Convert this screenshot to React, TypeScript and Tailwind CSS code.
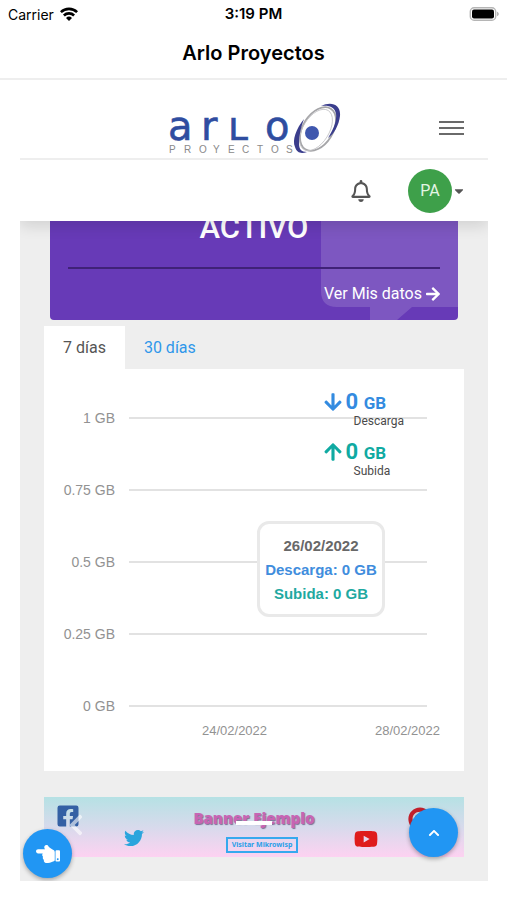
import React from "react";
import {
  FaArrowDown,
  FaArrowRight,
  FaArrowUp,
  FaCaretDown,
  FaChevronLeft,
  FaChevronUp,
  FaFacebookSquare,
  FaHandPointLeft,
  FaPinterest,
  FaRegBell,
  FaTwitter,
  FaYoutube,
} from "react-icons/fa";

const ticks = ["1 GB", "0.75 GB", "0.5 GB", "0.25 GB", "0 GB"];

const StatusBar: React.FC = () => (
  <div className="grid h-7 grid-cols-3 items-center px-2 text-[14px] text-black">
    <div className="flex items-center gap-[6px]">
      <span>Carrier</span>
      <svg viewBox="0 0 18 14" className="h-[14px] w-[18px]" fill="none" stroke="black" strokeWidth="2.6">
        <path d="M0.9 5.2a11.5 11.5 0 0 1 16.2 0" />
        <path d="M3.9 8.5a7.3 7.3 0 0 1 10.2 0" />
        <path d="M9 13.9 6 10.9a4.3 4.3 0 0 1 6 0z" fill="black" stroke="none" />
      </svg>
    </div>
    <span className="text-center text-[15px] font-semibold">3:19 PM</span>
    <svg viewBox="0 0 30 14" className="h-[14px] w-[30px] justify-self-end">
      <rect x="1.3" y="0.8" width="25.4" height="12.4" rx="3.8" fill="#fff" stroke="#b5b5b5" strokeWidth="1.4" />
      <rect x="3" y="2.4" width="22" height="9.2" rx="2" fill="black" />
      <path d="M28 4.8c2.4.7 2.4 3.7 0 4.4z" fill="#b5b5b5" />
    </svg>
  </div>
);

const Logo: React.FC = () => (
  <svg viewBox="0 0 176 54" className="h-[54px] w-[176px]" role="img" aria-label="Arlo Proyectos">
    <text x="-1 32 59 96" y="38" fontFamily="DejaVu Sans" fontSize="40" fill="#2f4da0" stroke="#2f4da0" strokeWidth="0.6">
      arʟo
    </text>
    <text x="0 15 30 44 59 73 88 102 117" y="51" fontFamily="Liberation Sans" fontSize="10" fill="#8a8a8a">
      PROYECTOS
    </text>
    <g fill="none">
      <ellipse cx="149" cy="27" rx="15" ry="24" transform="rotate(32 149 27)" stroke="#a5a5a8" strokeWidth="1.8" />
      <ellipse cx="147" cy="28" rx="13" ry="23" transform="rotate(32 147 28)" stroke="#c2c2c6" strokeWidth="0.8" />
    </g>
    <path d="M152 4c11-5 20-1 19 10-1 9-6 18-12 22 5-8 9-17 8-24-1-7-7-9-15-8z" fill="#3a3d8c" />
    <path d="M135 17c-8 10-12 21-9 28 2 6 6 7 12 5-6 0-8-3-8-9 0-8 2-16 5-24z" fill="#3a3d8c" />
    <circle cx="143" cy="31" r="7" fill="#3f57ae" />
  </svg>
);

const Header: React.FC = () => (
  <header className="relative z-10 bg-white shadow-[0_5px_14px_rgba(0,0,0,0.12)] [clip-path:inset(0_0_-20px_0)]">
    <div className="relative flex h-20 items-center justify-end border-b-2 border-[#eeeeee] pr-6">
      <div className="absolute top-[22px] left-[149px]">
        <Logo />
      </div>
      <button aria-label="Menú" className="mt-[18px] flex w-[25px] flex-col gap-1">
        <span className="h-[2px] bg-[#6a6a6a]" />
        <span className="h-[2px] bg-[#6a6a6a]" />
        <span className="h-[2px] bg-[#6a6a6a]" />
      </button>
    </div>
    <div className="flex h-[61px] items-center justify-end pr-6">
      <button aria-label="Notificaciones" className="mr-[37px] text-[#555555]">
        <FaRegBell className="h-[22px] w-[20px]" />
      </button>
      <button className="flex items-center gap-[2px]">
        <span className="flex h-11 w-11 items-center justify-center rounded-full bg-[#3ea04a] text-[16px] text-[#e3f5e4]">
          PA
        </span>
        <FaCaretDown className="h-[14px] w-[10px] text-[#555555]" />
      </button>
    </div>
  </header>
);

const StatusCard: React.FC = () => (
  <section className="relative mx-[30px] -mt-[14px] overflow-hidden rounded bg-[#673ab7] px-[18px] pt-[3px] pb-[14px] text-white">
    <svg viewBox="0 0 137 113" className="absolute right-0 bottom-0 h-[113px] w-[137px]">
      <path d="M0 0h137v100h-46l-15 13h-27v-13h-33q-16 0-16-16z" fill="white" fillOpacity="0.15" />
    </svg>
    <h2 className="relative text-center text-[31px] leading-9 font-medium">ACTIVO</h2>
    <div className="relative mt-[21px] h-[2px] bg-[#402277]" />
    <a href="#datos" className="relative mt-[13px] flex items-center justify-end gap-1 text-[16px] leading-6">
      Ver Mis datos <FaArrowRight className="h-4 w-[14px]" />
    </a>
  </section>
);

const Chart: React.FC = () => (
  <div className="relative bg-white pt-[13px] pb-[34px] font-['Liberation_Sans',sans-serif] text-[13px] text-[#929292]">
    {ticks.map((tick) => (
      <div key={tick} className="flex h-[72px] items-center gap-[14px] pr-[37px]">
        <span className="w-[71px] text-right text-[14px]">{tick}</span>
        <span className="h-[2px] flex-1 bg-[#e2e2e2]" />
      </div>
    ))}
    <div className="-mt-[17px] flex justify-between pr-6 pl-[158px] leading-[12px]">
      <span>24/02/2022</span>
      <span>28/02/2022</span>
    </div>

    <div className="absolute top-[19px] right-[60px] font-[Roboto,sans-serif]">
      <div className="flex h-[27px] items-center gap-1 font-bold text-[#338be0]">
        <FaArrowDown className="h-5 w-[18px]" />
        <p className="text-[22px]">
          0 <span className="text-[17px]">GB</span>
        </p>
      </div>
      <p className="pl-[30px] text-[12px] leading-3 text-[#4a4a4a]">Descarga</p>
      <div className="mt-[11px] flex h-[27px] items-center gap-1 font-bold text-[#10aaa2]">
        <FaArrowUp className="h-5 w-[18px]" />
        <p className="text-[22px]">
          0 <span className="text-[17px]">GB</span>
        </p>
      </div>
      <p className="pl-[30px] text-[12px] leading-3 text-[#4a4a4a]">Subida</p>
    </div>

    <div className="absolute top-[152px] right-[79px] w-32 rounded-xl border-[3px] border-[#e9e9e9] bg-white pt-[10px] pb-2 text-center text-[15px] leading-6 font-bold">
      <p className="text-[#686868]">26/02/2022</p>
      <p className="whitespace-nowrap text-[#408ddd]">Descarga: 0 GB</p>
      <p className="text-[#1fa9a1]">Subida: 0 GB</p>
    </div>
  </div>
);

const Banner: React.FC = () => (
  <section className="relative mx-6 mt-[26px] h-[60px] bg-linear-to-b from-[#b5e1e4] via-[#d7daec] to-[#fdd2f1]">
    <FaFacebookSquare className="absolute top-[7px] left-3 h-6 w-6 text-[#3460a4]" />
    <FaChevronLeft className="absolute top-4 left-6 h-6 w-4 text-white/60" />
    <FaTwitter className="absolute top-[31px] left-20 h-5 w-5 text-[#2aa5dd]" />
    <div className="flex flex-col items-center gap-[7px] pt-[9px] pl-4">
      <h3 className="pr-4 font-['Open_Sans',sans-serif] text-[15px] leading-6 font-extrabold text-[#c765b4] [text-shadow:1px_1px_1px_#7b6f96]">
        Banner Ejemplo
      </h3>
      <a
        href="#mikrowisp"
        className="border-2 border-[#36a9ee] px-1 font-['Noto_Sans',sans-serif] text-[7px] leading-3 font-bold text-[#2a9fe8]"
      >
        Visitar Mikrowisp
      </a>
    </div>
    <span className="absolute top-6 left-1/2 ml-[-18px] h-1 w-9 bg-white" />
    <FaYoutube className="absolute top-[30px] right-[86px] h-6 w-6 text-[#df1c1c]" />
    <FaPinterest className="absolute top-[10px] right-8 h-6 w-6 text-[#c2202c]" />
  </section>
);

const App: React.FC = () => {
  return (
    <div className="min-h-screen bg-white font-[Inter,sans-serif]">
      <StatusBar />
      <h1 className="flex h-[52px] items-center justify-center border-b-2 border-[#eeeeee] text-[20px] font-semibold text-black">
        Arlo Proyectos
      </h1>
      <div className="mr-[19px] ml-5 font-[Roboto,sans-serif]">
        <Header />
        <main className="relative overflow-hidden bg-[#eeeeee] pb-6">
          <StatusCard />
          <section className="mx-6 mt-[6px]">
            <div role="tablist" className="flex text-[16px]">
              <button role="tab" aria-selected="true" className="h-[43px] bg-white px-[19px] text-[#555555]">
                7 días
              </button>
              <button role="tab" aria-selected="false" className="h-[43px] px-[19px] text-[#2e97ea]">
                30 días
              </button>
            </div>
            <Chart />
          </section>
          <Banner />
          <button
            aria-label="Anterior"
            className="absolute bottom-[3px] left-[3px] flex h-[49px] w-[49px] items-center justify-center rounded-full bg-[#2196f3] text-white shadow-[0_2px_4px_rgba(0,0,0,0.3)]"
          >
            <FaHandPointLeft className="h-6 w-6" />
          </button>
          <button
            aria-label="Subir"
            className="absolute right-[30px] bottom-6 flex h-[49px] w-[49px] items-center justify-center rounded-full bg-[#2196f3] text-white shadow-[0_2px_4px_rgba(0,0,0,0.3)]"
          >
            <FaChevronUp className="h-3 w-3" />
          </button>
        </main>
      </div>
    </div>
  );
};

export default App;
